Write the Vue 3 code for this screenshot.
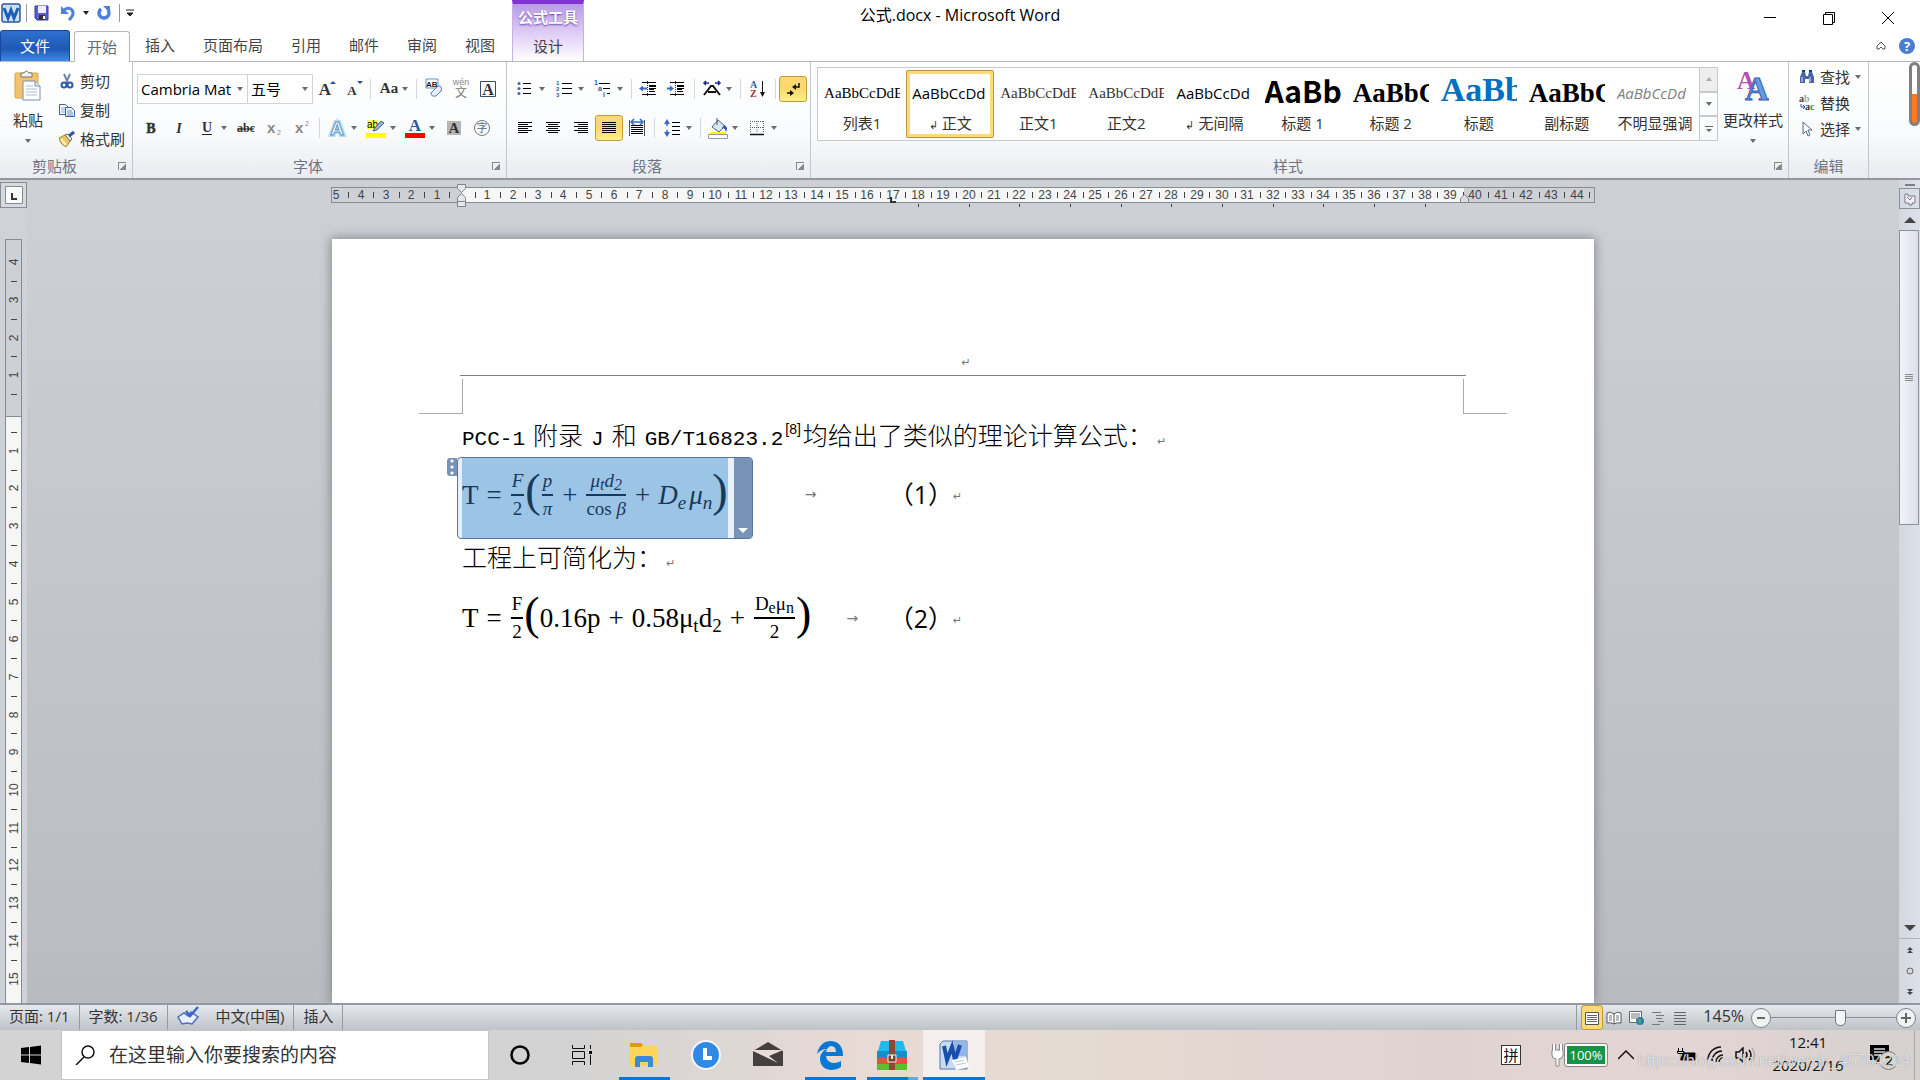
<template>
  <div class="window">
    <!-- Title bar -->
    <header class="title-bar">
      <div class="quick-access">
        <button class="quick app" aria-label="Word"><svg viewBox="0 0 20 20" width="20" height="20" v-html="icons.word"></svg></button>
        <i class="quick-line"></i>
        <button class="quick" aria-label="保存"><svg viewBox="0 0 16 16" width="16" height="16" v-html="icons.save"></svg></button>
        <button class="quick" aria-label="撤消"><svg viewBox="0 0 16 16" width="16" height="16" v-html="icons.undo"></svg></button>
        <i class="caret dark"></i>
        <button class="quick" aria-label="重复"><svg viewBox="0 0 16 16" width="16" height="16" v-html="icons.redo"></svg></button>
        <i class="quick-line"></i>
        <button class="quick more" aria-label="自定义"><svg viewBox="0 0 8 8" width="8" height="8"><path d="M0 1h8M1 4h6L4 7z" stroke="#222" fill="#222" /></svg></button>
      </div>
      <h1>公式.docx - Microsoft Word</h1>
      <div class="window-buttons">
        <button aria-label="最小化"><svg viewBox="0 0 14 14" width="14" height="14"><path d="M1 6.5h12" stroke="#000" /></svg></button>
        <button aria-label="还原"><svg viewBox="0 0 14 14" width="14" height="14"><path d="M1.5 3.5h9v10h-9zM3.5 3.5v-2h9v10h-2" stroke="#000" fill="none" /></svg></button>
        <button aria-label="关闭"><svg viewBox="0 0 14 14" width="14" height="14"><path d="M1 1l12 12M13 1L1 13" stroke="#000" /></svg></button>
      </div>
    </header>

    <!-- Ribbon tabs -->
    <nav class="tabs">
      <button class="tab file">文件</button>
      <button class="tab active">开始</button>
      <button v-for="tab in tabs" :key="tab" class="tab">{{ tab }}</button>
      <div class="context-tab">
        <span>公式工具</span>
        <button>设计</button>
      </div>
      <div class="tab-tools">
        <button aria-label="功能区最小化"><svg viewBox="0 0 10 10" width="10" height="10"><path d="M1 5l4-4 4 4v3H7L5 6 3 8H1z" fill="none" stroke="#555" /></svg></button>
        <button class="help" aria-label="帮助">?</button>
      </div>
    </nav>

    <!-- Ribbon -->
    <section class="ribbon">
      <div class="group clipboard">
        <div class="group-body">
          <button class="big-button">
            <svg viewBox="0 0 28 32" width="28" height="32" v-html="icons.paste"></svg>
            <span>粘贴</span>
            <i class="caret"></i>
          </button>
          <div class="small-buttons">
            <button v-for="item in clipboard" :key="item.label" class="small-button">
              <svg viewBox="0 0 16 16" width="16" height="16" v-html="icons[item.icon]"></svg>{{ item.label }}
            </button>
          </div>
        </div>
        <div class="group-label"><span>剪贴板</span><button class="launcher" aria-label="剪贴板选项"></button></div>
      </div>

      <div class="group font">
        <div class="group-body rows">
          <div class="tool-row narrow">
            <label class="combo family"><input v-model="fontFamily" aria-label="字体" /><i class="caret"></i></label>
            <label class="combo size"><input v-model="fontSize" aria-label="字号" /><i class="caret"></i></label>
            <template v-for="(tool, i) in fontRow1" :key="i">
              <i v-if="tool === '|'" class="divider"></i>
              <button v-else class="tool" :class="{ split: tool.menu, on: tool.on }" :aria-label="tool.name">
                <svg viewBox="0 0 22 22" width="22" height="22" v-html="icons[tool.icon]"></svg>
                <i v-if="tool.menu" class="caret"></i>
              </button>
            </template>
          </div>
          <div class="tool-row">
            <template v-for="(tool, i) in fontRow2" :key="i">
              <i v-if="tool === '|'" class="divider"></i>
              <button v-else class="tool" :class="{ split: tool.menu, on: tool.on }" :aria-label="tool.name">
                <svg viewBox="0 0 22 22" width="22" height="22" v-html="icons[tool.icon]"></svg>
                <i v-if="tool.menu" class="caret"></i>
              </button>
            </template>
          </div>
        </div>
        <div class="group-label"><span>字体</span><button class="launcher" aria-label="字体选项"></button></div>
      </div>

      <div class="group paragraph">
        <div class="group-body rows">
          <div v-for="(row, r) in paragraphRows" :key="r" class="tool-row">
            <template v-for="(tool, i) in row" :key="i">
              <i v-if="tool === '|'" class="divider"></i>
              <button v-else class="tool" :class="{ split: tool.menu, on: tool.on }" :aria-label="tool.name">
                <svg viewBox="0 0 22 22" width="22" height="22" v-html="icons[tool.icon]"></svg>
                <i v-if="tool.menu" class="caret"></i>
              </button>
            </template>
          </div>
        </div>
        <div class="group-label"><span>段落</span><button class="launcher" aria-label="段落选项"></button></div>
      </div>

      <div class="group styles">
        <div class="group-body">
          <div class="gallery">
            <button
              v-for="style in styles"
              :key="style.name"
              class="style-item"
              :class="[style.look, { selected: style.selected }]"
            >
              <span class="sample">{{ style.sample }}</span>
              <span class="style-name"><small v-if="style.mark">↲</small>{{ style.name }}</span>
            </button>
          </div>
          <div class="gallery-scroll">
            <button class="off" aria-label="上一行"><i class="caret up"></i></button>
            <button aria-label="下一行"><i class="caret"></i></button>
            <button aria-label="其他"><svg viewBox="0 0 8 8" width="8" height="8"><path d="M0 1.500h8" stroke="#666" /><path d="M1 4h6L4 7z" fill="#666" /></svg></button>
          </div>
          <button class="big-button change">
            <svg viewBox="0 0 32 32" width="32" height="32" v-html="icons.styles"></svg>
            <span>更改样式</span>
            <i class="caret"></i>
          </button>
        </div>
        <div class="group-label"><span>样式</span><button class="launcher" aria-label="样式选项"></button></div>
      </div>

      <div class="group editing">
        <div class="group-body">
          <div class="small-buttons">
            <button v-for="item in editing" :key="item.label" class="small-button">
              <svg viewBox="0 0 16 16" width="16" height="16" v-html="icons[item.icon]"></svg>{{ item.label }}
              <i v-if="item.menu" class="caret"></i>
            </button>
          </div>
        </div>
        <div class="group-label"><span>编辑</span></div>
      </div>
      <div class="level"><i></i></div>
    </section>

    <!-- Workspace -->
    <main class="workspace">
      <aside class="left-rail">
        <button class="tab-type" aria-label="制表符"><svg viewBox="0 0 18 18" width="18" height="18"><path d="M.5.5h17v17H.5z" fill="#fafafa" stroke="#868b95" /><path d="M7 7v6h5" fill="none" stroke="#333" stroke-width="2" /></svg></button>
        <svg class="v-ruler" width="17" height="800" viewBox="0 0 17 800">
          <rect x="0.5" y="0.5" width="16" height="810" fill="#f6f6f6" stroke="#868b95" />
          <rect x="0.5" y="0.5" width="16" height="177" fill="#cdd0d5" stroke="#868b95" />
          <g v-for="mark in verticalMarks" :key="mark.y">
            <text v-if="mark.label" :transform="`translate(13 ${mark.y}) rotate(-90)`" text-anchor="middle">{{ mark.label }}</text>
            <path v-else :d="`M6 ${mark.y}h6`" stroke="#444" />
          </g>
        </svg>
      </aside>

      <div class="canvas">
        <svg class="h-ruler" width="1264" height="28" viewBox="0 2 1264 28">
          <rect x="0.5" y="9.5" width="1263" height="15" fill="#cdd0d5" stroke="#868b95" />
          <path d="M131 10h1002v14H131z" fill="#f6f6f6" />
          <path d="M0 9.5h1264M0 24.5h1264" stroke="#868b95" />
          <g v-for="mark in horizontalMarks" :key="mark.x">
            <text v-if="mark.label" :x="mark.x" y="21" text-anchor="middle">{{ mark.label }}</text>
            <path v-else :d="`M${mark.x} 14v6`" stroke="#444" />
          </g>
          <path v-for="x in tabStops" :key="x" :d="`M${x} 26v3`" stroke="#444" />
          <path d="M560 19v5h5" fill="none" stroke="#333" stroke-width="2" />
          <path d="M126.5 6.5h8v4l-4 4-4-4zM130.5 15.5l4 4v9h-8v-9zM126.5 23.5h8" fill="#e8e8e8" stroke="#80848c" />
          <path d="M1133.5 16.5l4 4v4h-8v-4z" fill="#ddd" stroke="#80848c" />
        </svg>

        <article class="page">
          <div class="page-header"><span class="return">↵</span></div>
          <div class="corners"><i class="left"></i><i class="right"></i></div>

          <p class="line first">
            <span class="latin">PCC-1</span><span class="word">附录</span><span class="latin">J</span><span class="word">和</span><span class="latin">GB/T16823.2</span><sup>[8]</sup><span>均给出了类似的理论计算公式：</span><span class="return">↵</span>
          </p>

          <div class="equation-row first">
            <div class="equation-box">
              <i class="grip"></i>
              <div class="formula selected">
                <span>T</span><span class="op">=</span>
                <span class="frac"><i>F</i><b>2</b></span>
                <span class="paren">(</span>
                <span class="frac"><i>p</i><i>π</i></span>
                <span class="op">+</span>
                <span class="frac"><i>μ<sub>t</sub>d<sub>2</sub></i><b>cos <i>β</i></b></span>
                <span class="op">+</span>
                <i>D<sub>e</sub></i><i class="mu">μ<sub>n</sub></i>
                <span class="paren">)</span>
              </div>
              <button class="equation-menu" aria-label="公式选项"><i></i></button>
            </div>
            <span class="tab-arrow">→</span>
            <span class="number">（1）</span><span class="return">↵</span>
          </div>

          <p class="line">工程上可简化为：<span class="return">↵</span></p>

          <div class="equation-row second">
            <div class="formula">
              <span>T</span><span class="op">=</span>
              <span class="frac"><b>F</b><b>2</b></span>
              <span class="paren">(</span>
              <span>0.16p</span>
              <span class="op">+</span>
              <span>0.58μ<sub>t</sub>d<sub>2</sub></span>
              <span class="op">+</span>
              <span class="frac"><b>D<sub>e</sub>μ<sub>n</sub></b><b>2</b></span>
              <span class="paren">)</span>
            </div>
            <span class="tab-arrow">→</span>
            <span class="number">（2）</span><span class="return">↵</span>
          </div>
        </article>
      </div>

      <aside class="scroll-rail">
        <i class="splitter"></i>
        <button class="ruler-toggle" aria-label="标尺"><svg viewBox="0 0 14 14" width="14" height="14"><path d="M2 2h3v2h7v7h-3v2H6v-2H2zM4 5l3 3M7 8l2-3" fill="#f4eff4" stroke="#777c85" /></svg></button>
        <button class="arrow" aria-label="向上"><svg viewBox="0 0 12 6" width="12" height="6"><path d="M0 6l6-6 6 6z" fill="#444" /></svg></button>
        <div class="track"><div class="thumb"><i></i></div></div>
        <button class="arrow" aria-label="向下"><svg viewBox="0 0 12 6" width="12" height="6"><path d="M0 0l6 6 6-6z" fill="#444" /></svg></button>
        <div class="browse">
          <button aria-label="前一页"><svg viewBox="0 0 8 8" width="8" height="8"><path d="M1 4l3-3 3 3zM1 7l3-3 3 3z" fill="#444" /></svg></button>
          <button aria-label="选择浏览对象"><svg viewBox="0 0 8 8" width="8" height="8"><circle cx="4" cy="4" r="3" fill="#d5d8dc" stroke="#666" /></svg></button>
          <button aria-label="下一页"><svg viewBox="0 0 8 8" width="8" height="8"><path d="M1 1l3 3 3-3zM1 4l3 3 3-3z" fill="#444" /></svg></button>
        </div>
      </aside>
    </main>

    <!-- Status bar -->
    <footer class="status-bar">
      <button>页面: 1/1</button>
      <button>字数: 1/36</button>
      <button class="language"><svg viewBox="0 0 22 20" width="22" height="20" v-html="icons.proof"></svg>中文(中国)</button>
      <button>插入</button>
      <div class="views">
        <button v-for="view in views" :key="view.icon" :class="{ on: view.on }" :aria-label="view.name">
          <svg viewBox="0 0 16 16" width="16" height="16" v-html="icons[view.icon]"></svg>
        </button>
      </div>
      <button class="percent">{{ zoom }}%</button>
      <button class="round" aria-label="缩小"><svg viewBox="0 0 18 18" width="18" height="18"><path d="M5 9h8" stroke="#666" stroke-width="2" /></svg></button>
      <input v-model="zoom" class="zoom" type="range" min="10" max="250" aria-label="显示比例" />
      <button class="round" aria-label="放大"><svg viewBox="0 0 18 18" width="18" height="18"><path d="M4 9h10M9 4v10" stroke="#666" stroke-width="2" /></svg></button>
    </footer>

    <!-- Windows taskbar -->
    <div class="taskbar">
      <button class="start" aria-label="开始菜单"><svg viewBox="0 0 20 20" width="20" height="20"><path d="M0 3l8-1v7.500H0zM9 2l11-1.500v9H9zM0 10.500h8V18l-8-1zM9 10.500h11v9L9 18z" fill="#000" /></svg></button>
      <label class="search">
        <svg viewBox="0 0 20 20" width="20" height="20"><circle cx="13" cy="7" r="6" fill="none" stroke="#111" stroke-width="1.500" /><path d="M9 12l-8 8" stroke="#111" stroke-width="1.500" /></svg>
        <input type="text" placeholder="在这里输入你要搜索的内容" aria-label="搜索" />
      </label>
      <button v-for="app in apps" :key="app.icon" class="app-button" :class="app.state" :aria-label="app.name">
        <svg viewBox="0 0 30 30" width="30" height="30" v-html="icons[app.icon]"></svg>
      </button>
      <div class="tray">
        <button class="ime">拼</button>
        <div class="battery">
          <svg viewBox="0 0 14 24" width="14" height="24"><path d="M3 1v6M10 1v6" stroke="#888" stroke-width="4" /><path d="M1 7h11v5q0 4-4 4v7H5v-7q-4 0-4-4z" fill="#fff" stroke="#888" /><path d="M3 1v7M10 1v7" stroke="#fff" stroke-width="2" /></svg>
          <span>100%</span>
        </div>
        <button class="chevron" aria-label="显示隐藏的图标"><svg viewBox="0 0 16 10" width="16" height="10"><path d="M0 9l8-8 8 8" fill="none" stroke="#111" stroke-width="1.500" /></svg></button>
        <div class="tray-icons">
          <svg viewBox="0 0 20 14" width="20" height="14"><path d="M6 5h12v7H4V9" fill="#000" stroke="#000" /><path d="M19.500 6v4M1.500 0v3M5.500 0v3M0 3.500h7v2H1zM3.500 5v7" stroke="#000" fill="none" /></svg>
          <svg viewBox="0 0 18 18" width="18" height="18"><path d="M1 14A13 13 0 0 1 14 1M5 15A10 10 0 0 1 15 5M9 16a7 7 0 0 1 7-7M12 16a4 4 0 0 1 4-4" fill="none" stroke="#111" stroke-width="1.500" /></svg>
          <svg viewBox="0 0 20 16" width="20" height="16"><path d="M1 5h3l4-4v14l-4-4H1z" fill="none" stroke="#111" stroke-width="1.500" /><path d="M11 5q2 3 0 6M14 3q4 5 0 10" fill="none" stroke="#111" stroke-width="1.500" /><path d="M17 1q5 7 0 14" fill="none" stroke="#999" /></svg>
        </div>
        <button class="clock"><span>12:41</span><span>2020/2/16</span></button>
        <button class="notice" aria-label="通知">
          <svg viewBox="0 0 22 22" width="22" height="22"><path d="M1 1h19v15h-9l-4 4v-4H1z" fill="#000" /><path d="M5 5h11M5 8h11M5 11h7" stroke="#ddd" stroke-width="1.500" /></svg>
          <b>2</b>
        </button>
      </div>
      <span class="watermark">https://blog.csdn.net/weixin_45704214</span>
    </div>
  </div>
</template>

<script setup>
import { ref } from 'vue'

const fontFamily = ref('Cambria Mat')
const fontSize = ref('五号')
const zoom = ref(145)

const tabs = ['插入', '页面布局', '引用', '邮件', '审阅', '视图']

const clipboard = [
  { icon: 'cut', label: '剪切' },
  { icon: 'copy', label: '复制' },
  { icon: 'brush', label: '格式刷' }
]

const editing = [
  { icon: 'find', label: '查找', menu: true },
  { icon: 'replace', label: '替换' },
  { icon: 'select', label: '选择', menu: true }
]

const fontRow1 = [
  { icon: 'grow', name: '增大字体' },
  { icon: 'shrink', name: '缩小字体' },
  '|',
  { icon: 'caseAa', name: '更改大小写', menu: true },
  '|',
  { icon: 'clear', name: '清除格式' },
  { icon: 'pinyin', name: '拼音指南' },
  { icon: 'boxed', name: '字符边框' }
]

const fontRow2 = [
  { icon: 'bold', name: '加粗' },
  { icon: 'italic', name: '倾斜' },
  { icon: 'underline', name: '下划线', menu: true },
  { icon: 'strike', name: '删除线' },
  { icon: 'subscript', name: '下标' },
  { icon: 'superscript', name: '上标' },
  '|',
  { icon: 'effect', name: '文本效果', menu: true },
  { icon: 'highlight', name: '突出显示', menu: true },
  { icon: 'color', name: '字体颜色', menu: true },
  { icon: 'shaded', name: '字符底纹' },
  { icon: 'enclose', name: '带圈字符' }
]

const paragraphRows = [
  [
    { icon: 'bullets', name: '项目符号', menu: true },
    { icon: 'numbers', name: '编号', menu: true },
    { icon: 'levels', name: '多级列表', menu: true },
    '|',
    { icon: 'outdent', name: '减少缩进量' },
    { icon: 'indent', name: '增加缩进量' },
    '|',
    { icon: 'asian', name: '中文版式', menu: true },
    '|',
    { icon: 'sort', name: '排序' },
    '|',
    { icon: 'marks', name: '显示编辑标记', on: true }
  ],
  [
    { icon: 'left', name: '左对齐' },
    { icon: 'center', name: '居中' },
    { icon: 'right', name: '右对齐' },
    { icon: 'justify', name: '两端对齐', on: true },
    { icon: 'distribute', name: '分散对齐' },
    '|',
    { icon: 'spacing', name: '行距', menu: true },
    '|',
    { icon: 'fill', name: '底纹', menu: true },
    { icon: 'border', name: '边框', menu: true }
  ]
]

const styles = [
  { sample: 'AaBbCcDdE', name: '列表1', look: 'serif' },
  { sample: 'AaBbCcDd', name: '正文', look: 'sans', mark: true, selected: true },
  { sample: 'AaBbCcDdE', name: '正文1', look: 'song' },
  { sample: 'AaBbCcDdE', name: '正文2', look: 'song' },
  { sample: 'AaBbCcDd', name: '无间隔', look: 'sans', mark: true },
  { sample: 'AaBbC', name: '标题 1', look: 'heading1' },
  { sample: 'AaBbC', name: '标题 2', look: 'heading2' },
  { sample: 'AaBbC', name: '标题', look: 'title' },
  { sample: 'AaBbC', name: '副标题', look: 'heading2' },
  { sample: 'AaBbCcDd', name: '不明显强调', look: 'subtle' }
]

const views = [
  { icon: 'viewPage', name: '页面视图', on: true },
  { icon: 'viewRead', name: '阅读版式' },
  { icon: 'viewWeb', name: 'Web 版式' },
  { icon: 'viewOutline', name: '大纲' },
  { icon: 'viewDraft', name: '草稿' }
]

const apps = [
  { icon: 'cortana', name: 'Cortana' },
  { icon: 'taskView', name: '任务视图' },
  { icon: 'explorer', name: '文件资源管理器', state: 'open' },
  { icon: 'clockApp', name: '时钟' },
  { icon: 'mail', name: '邮件' },
  { icon: 'edge', name: 'Edge', state: 'open' },
  { icon: 'archive', name: '压缩', state: 'open several' },
  { icon: 'wordApp', name: 'Word', state: 'current' }
]

// Ruler marks: a number on each unit, a tick on each half unit
const buildMarks = (from, to, step, origin, key) => {
  const marks = []
  for (let half = from * 2; half <= to * 2; half++) {
    if (half === 0) continue
    const place = Math.round(origin + (half / 2) * step)
    marks.push(half % 2 ? { [key]: place + 0.5 } : { [key]: place, label: Math.abs(half / 2) })
  }
  return marks
}
const horizontalMarks = buildMarks(-5, 44.5, 25.33, 131, 'x').map((mark) =>
  mark.label === 5 && mark.x < 20 ? { ...mark, x: 5 } : mark
)
const verticalMarks = buildMarks(-4, 15, 37.7, 174, 'y')
const tabStops = [18, 20, 22, 24, 26, 28, 30, 32, 34, 36, 38].map((n) => Math.round(131 + n * 25.33) + 0.5)

const serifText = (x, y, size, text, extra = '') =>
  `<text x="${x}" y="${y}" font-family="Liberation Serif, serif" font-weight="700" font-size="${size}" text-anchor="middle" fill="#333" ${extra}>${text}</text>`

const lines = (rows, color = '#000') =>
  rows.map(([x, y, w]) => `<path d="M${x} ${y}.5h${w}" stroke="${color}"/>`).join('')

const icons = {
  word: `<rect x="1" y="1" width="18" height="18" rx="2" fill="#cfe0f5" stroke="#2b5797" stroke-width="1.5"/><path d="M3 5l4 10 3-8 3 8 4-10" fill="none" stroke="#1b5fb8" stroke-width="3"/>`,
  save: `<path d="M1 1h13v14H3l-2-2z" fill="#5a5fd0" stroke="#33389c"/><path d="M4 1h8v7H4z" fill="#eef"/><path d="M5 10h6v5H5z" fill="#333"/><path d="M9 11h2v3H9z" fill="#fff"/>`,
  undo: `<path d="M3 6q5-5 9-1 3 4-3 10" fill="none" stroke="#4f7fdc" stroke-width="3"/><path d="M1 1v8h8z" fill="#4f7fdc"/>`,
  redo: `<path d="M5 4A5 5 0 1 0 12 5" fill="none" stroke="#4f7fdc" stroke-width="3.500"/><path d="M7 1h7v7z" fill="#4f7fdc"/>`,
  paste: `<rect x="1" y="3" width="23" height="25" rx="1" fill="#f2c36b" stroke="#d8a545"/><path d="M7 7V3h3q2-4 5 0h3v4z" fill="#f3f3f3" stroke="#777"/><path d="M9 11h12l5 5v14H9z" fill="#fff" stroke="#7590b5"/><path d="M21 11v5h5" fill="#dce6f4" stroke="#7590b5"/><path d="M12 16h7M12 19h11M12 22h11M12 25h11" stroke="#a9bad2"/>`,
  cut: `<path d="M5 1l4 9M11 1L7 10" stroke="#7485a5" stroke-width="2"/><circle cx="5" cy="12" r="2.500" fill="none" stroke="#2c5cad" stroke-width="2"/><circle cx="11" cy="12" r="2.500" fill="none" stroke="#2c5cad" stroke-width="2"/>`,
  copy: `<path d="M.5 2.500h6l3 3v7h-9z" fill="#fff" stroke="#3a62ac"/><path d="M2 6h5M2 8h5M2 10h5" stroke="#8ba6d4"/><path d="M6.500 5.500h6l3 3v6h-9z" fill="#e8f0fb" stroke="#3a62ac"/><path d="M8 9h5M8 11h6M8 13h6" stroke="#6f90cb"/>`,
  brush: `<path d="M0 7l6-3 6 5-5 7q-6-3-7-9z" fill="#e9c566" stroke="#a18237"/><path d="M2 8l5 6" stroke="#fff2bd" stroke-width="2"/><path d="M6 4l3-1 4 5-2 2z" fill="#eee" stroke="#666"/><path d="M10 5l5-4" stroke="#3751a0" stroke-width="3"/>`,
  find: `<path d="M1 14V8l2-5h3l1 4h2l1-4h3l2 5v6h-5v-4H6v4z" fill="#4a64a4"/><path d="M3 2h3M10 2h3" stroke="#20386d" stroke-width="2"/><path d="M3 8v5M11 8v5" stroke="#dbe5f5"/>`,
  replace: `<text x="0" y="7" font-size="10" font-weight="700" font-family="Liberation Serif" fill="#444">a<tspan fill="#aaa">b</tspan></text><text x="6" y="15" font-size="10" font-weight="700" font-family="Liberation Serif" fill="#333">a<tspan fill="#2a8a2a">c</tspan></text><path d="M2 9v3h3M4 10l2 2-2 2" fill="none" stroke="#2b57a7"/>`,
  select: `<path d="M4 1v12l3-3 2 5 2-1-2-5h4z" fill="#fff" stroke="#56688c"/>`,
  styles: `<text x="0" y="19" font-size="25" font-weight="700" font-family="Liberation Serif" fill="#b94fae">A</text><text x="8" y="30" font-size="33" font-weight="700" font-family="Liberation Serif" fill="#6b9ae4" stroke="#315fae">A</text>`,
  grow: serifText(9, 17, 17, 'A') + '<path d="M14 6l3-3 3 3z" fill="#2c4f99"/>',
  shrink: serifText(9, 17, 13, 'A') + '<path d="M14 3h6l-3 3z" fill="#2c4f99"/>',
  caseAa: serifText(12, 15, 15, 'Aa'),
  clear: `<text x="3" y="9" font-size="8" font-weight="700" fill="#222" font-family="Liberation Sans">AB</text><path d="M3 1h12v9H3z" fill="none" stroke="#6f8ec0"/><path d="M8 15l7-7q5 0 3 5l-5 5q-5 1-5-3z" fill="#e6eefa" stroke="#5878b8"/>`,
  pinyin: `<text x="11" y="7" font-size="9" text-anchor="middle" fill="#888" font-family="Liberation Sans">wén</text><text x="11" y="19" font-size="12" text-anchor="middle" fill="#777" font-family="Noto Sans CJK SC">文</text>`,
  boxed: `<path d="M3.500 3.500h15v15h-15z" fill="#fff" stroke="#3b4a67"/>` + serifText(11, 17, 16, 'A'),
  bold: serifText(11, 16, 14, 'B', 'stroke="#333" stroke-width=".5"'),
  italic: serifText(11, 16, 14, 'I', 'font-style="italic"'),
  underline: serifText(11, 15, 14, 'U') + '<path d="M6 17.500h10" stroke="#222"/>',
  strike: serifText(11, 15, 12, 'abc') + '<path d="M2 12h17" stroke="#222"/>',
  subscript: `<text x="4" y="16" font-size="15" font-weight="700" fill="#888" font-family="Liberation Sans">x</text><text x="14" y="18" font-size="7" fill="#888" font-family="Liberation Sans">2</text>`,
  superscript: `<text x="4" y="16" font-size="15" font-weight="700" fill="#888" font-family="Liberation Sans">x</text><text x="14" y="9" font-size="7" fill="#888" font-family="Liberation Sans">2</text>`,
  effect: `<text x="11" y="18" font-size="19" font-weight="700" text-anchor="middle" fill="#fff" stroke="#b5dcf5" stroke-width="4" font-family="Liberation Sans">A</text><text x="11" y="18" font-size="19" font-weight="700" text-anchor="middle" fill="#fff" stroke="#5898ca" font-family="Liberation Sans">A</text>`,
  highlight: `<path d="M2 3h10v9H2z" fill="#ffff4d"/><text x="2" y="11" font-size="10" fill="#000" font-family="Liberation Sans">ab</text><path d="M9 12l7-8 3 2-7 7-4 1z" fill="#9ab3da" stroke="#445f91"/><path d="M1 16h20v5H1z" fill="#ff0"/>`,
  color: serifText(11, 14, 17, 'A', 'style="fill:#2f559e"') + '<path d="M1 16h20v5H1z" fill="#f00"/>',
  shaded: `<path d="M4 4h14v14H4z" fill="#b5b5b5"/>` + serifText(11, 16, 15, 'A'),
  enclose: `<circle cx="11" cy="11" r="7.500" fill="none" stroke="#777"/><text x="11" y="15" font-size="11" text-anchor="middle" fill="#666" font-family="Noto Sans CJK SC">字</text>`,
  bullets: lines([[9, 5, 8], [9, 10, 8], [9, 15, 8]]) + '<circle cx="5" cy="5.500" r="1.500" fill="#3a68b8"/><circle cx="5" cy="10.500" r="1.500" fill="#3a68b8"/><circle cx="5" cy="15.500" r="1.500" fill="#3a68b8"/>',
  numbers: lines([[9, 5, 10], [9, 10, 10], [9, 15, 10]]) + '<g font-size="6" font-weight="700" fill="#2d5cb0" font-family="Liberation Sans"><text x="3" y="7">1</text><text x="3" y="13">2</text><text x="3" y="19">3</text></g>',
  levels: lines([[7, 5, 11], [11, 10, 7], [15, 15, 3]]) + '<g font-size="7" font-weight="700" fill="#2d5cb0" font-family="Liberation Sans"><text x="2" y="7">1</text><text x="6" y="13">a</text><text x="11" y="19">i</text></g>',
  outdent: lines([[4, 4, 14], [11, 7, 7], [11, 10, 7], [11, 13, 6], [4, 16, 14]]) + lines([[11, 8, 7], [11, 11, 5]]) + '<path d="M1 10.500l4-3v2h4v2H5v2z" fill="#356bc4"/><path d="M9.500 3v16" stroke="#333" stroke-dasharray="1 1"/>',
  indent: lines([[4, 4, 14], [11, 7, 7], [11, 10, 7], [11, 13, 6], [4, 16, 14]]) + lines([[11, 8, 7], [11, 11, 5]]) + '<path d="M8 10.500l-4-3v2H1v2h3v2z" fill="#356bc4"/><path d="M9.500 3v16" stroke="#333" stroke-dasharray="1 1"/>',
  asian: `<path d="M3 17l7-9h2l7 9M7 14h8" fill="none" stroke="#111" stroke-width="2"/><path d="M3 5h5M5 3L3 5l2 2M14 5h5M17 3l2 2-2 2" fill="none" stroke="#1c2794" stroke-width="1.500"/>`,
  sort: `<text x="3" y="10" font-size="10" font-weight="700" fill="#3560a9" font-family="Liberation Serif">A</text><text x="3" y="19" font-size="10" font-weight="700" fill="#9b3434" font-family="Liberation Serif">Z</text><path d="M15.500 3v13" stroke="#111"/><path d="M13 14h5l-2.500 5z" fill="#111"/>`,
  marks: `<path d="M17 5v4h-5M5 15h5" stroke="#111" stroke-width="1.500" fill="none"/><path d="M10 9l4-3v6zM12 15l-4-3v6z" fill="#111"/>`,
  left: lines([[4, 5, 14], [4, 7, 10], [4, 9, 14], [4, 11, 10], [4, 13, 14], [4, 15, 10]]),
  center: lines([[4, 5, 14], [6, 7, 10], [4, 9, 14], [6, 11, 10], [4, 13, 14], [6, 15, 10]]),
  right: lines([[4, 5, 14], [8, 7, 10], [4, 9, 14], [8, 11, 10], [4, 13, 14], [8, 15, 10]]),
  justify: lines([[4, 5, 14], [4, 7, 14], [4, 9, 14], [4, 11, 14], [4, 13, 14], [4, 15, 14]]),
  distribute: lines([[5, 8, 12], [5, 10, 12], [5, 12, 12], [5, 14, 12], [5, 16, 12]]) + '<path d="M3.500 3v16M18.500 3v16" stroke="#555"/><path d="M5 5h12M8 2L5 5l3 3M14 2l3 3-3 3" fill="none" stroke="#356bc4" stroke-width="1.500"/>',
  spacing: lines([[11, 5, 8], [11, 9, 8], [11, 13, 8], [11, 17, 8]]) + '<path d="M6 4v14" stroke="#356bc4" stroke-width="1.500" stroke-dasharray="5 4"/><path d="M3 7l3-5 3 5zM3 15l3 5 3-5z" fill="#356bc4"/>',
  fill: `<path d="M5 10l6-7 7 6-6 6z" fill="#dce7f5" stroke="#48638e"/><path d="M10 1v7" stroke="#456"/><path d="M17 8q5 2 2 7-1-4-4-4z" fill="#355d9f"/><path d="M3 16h16" stroke="#ff0" stroke-width="2"/><path d="M1.500 17.500h19v4h-19z" fill="#fff" stroke="#999"/>`,
  border: `<path d="M4 4.500h14M4 10.500h14M4.500 4v12M11 4v12M17.500 4v12" stroke="#666" stroke-dasharray="1 1"/><path d="M4 17.500h14" stroke="#111" stroke-width="1.500"/>`,
  proof: `<path d="M1 11l6-4 4 3 3-4 7 5-6 7-5-1-5 1z" fill="#e9eefa" stroke="#4770c2" stroke-width="1.500"/><path d="M9 5l4 5 8-9" fill="none" stroke="#3569cc" stroke-width="2.500"/>`,
  viewPage: `<path d="M1.500 2.500h13v12h-13z" fill="#fff" stroke="#555"/><path d="M3 5.500h10M3 7.500h10M3 9.500h10M3 11.500h10" stroke="#666"/>`,
  viewRead: `<path d="M8 4q-4-3-7-1v10q4-1 7 1 3-2 7-1V3q-4-2-7 1v10" fill="#fff" stroke="#555"/><path d="M3 6h3M3 8h3M3 10h3M10 6h3M10 8h3M10 10h3" stroke="#777"/>`,
  viewWeb: `<path d="M1.500 1.500h12v11h-12z" fill="#fff" stroke="#666"/><path d="M3 4h9M3 6h9M3 8h6" stroke="#777"/><circle cx="12" cy="11" r="4" fill="#347ba8"/><path d="M10 10q3-3 3 1t-2 2" fill="#4ab35b"/>`,
  viewOutline: lines([[2, 2, 9], [6, 5, 8], [6, 8, 6], [8, 11, 6], [2, 14, 8]], '#777'),
  viewDraft: lines([[2, 2, 12], [2, 5, 12], [2, 8, 12], [2, 11, 12], [2, 14, 12]], '#666'),
  cortana: `<circle cx="15" cy="15" r="8.500" fill="none" stroke="#000" stroke-width="2.500"/>`,
  taskView: `<path d="M5.500 5v3.500h12V5M5.500 25v-3.500h12V25M5.500 11.500h12v7h-12zM23.500 5v4M23.500 15v10" fill="none" stroke="#111"/><path d="M22 11h3v3h-3z"/>`,
  explorer: `<path d="M1 3h11l2 3h14v20H1z" fill="#ffd45c"/><path d="M1 3h11l2 2-2 2H1z" fill="#dc9d00"/><path d="M6 27V19q0-3 3-3h12q3 0 3 3v8h-5v-5h-8v5z" fill="#3c8bd0"/>`,
  clockApp: `<circle cx="15" cy="15" r="14" fill="#2f8ae6" stroke="#f4f7fa" stroke-width="2"/><path d="M14 8v10h7" fill="none" stroke="#fff" stroke-width="4"/>`,
  mail: `<path d="M0 11l15-9 15 9v15H0z" fill="#44403d"/><path d="M0 10h30l-14 6 9 7-25-12z" fill="#eadcd6"/>`,
  edge: `<path d="M2 14C4 5 9 1 16 1q12 1 12 15H11q1 7 8 7 4 0 7-2v6q-4 3-10 3Q5 29 5 18q1-7 7-9-6 0-10 5zM11 12h10q0-6-5-6-4 1-5 6z" fill="#0878d4"/>`,
  archive: `<path d="M4 1h22l3 10H1z" fill="#20b9ed"/><path d="M0 11h30v7H0z" fill="#158fc6"/><path d="M0 18h30v6H0z" fill="#e35436"/><path d="M0 24h30v6H0z" fill="#5fbb2f"/><path d="M12 0h6v30h-6z" fill="#8b4b32"/><path d="M11 15h8v7h-8z" fill="#75422e" stroke="#eee"/><path d="M14 15h2v4h-2z" fill="#eee"/>`,
  wordApp: `<path d="M4 1h24v28H1V4z" fill="#c9dbf4" stroke="#5276b1"/><path d="M15 1h13v15H15z" fill="#94b6e6"/><path d="M5 6l3 14 5-13 3 13 5-15" fill="none" stroke="#174fab" stroke-width="4"/><path d="M13 20l14-3 3 10-13 3z" fill="#fff"/><path d="M16 22l9-2M17 25l10-2" stroke="#b4c8e4"/>`
}
</script>

<style>
body {
  margin: 0;
  overflow: hidden;
}
</style>

<style scoped>
.window {
  height: 100vh;
  display: flex;
  flex-direction: column;
  background: #fff;
  color: #333;
  font-family: "Open Sans", "Noto Sans CJK SC", sans-serif;
  font-size: 15px;
  line-height: 20px;
}

button {
  border: 0;
  padding: 0;
  background: none;
  color: inherit;
  font: inherit;
  white-space: nowrap;
}

svg {
  display: block;
  flex: none;
}

/* Title bar */
.title-bar {
  height: 30px;
  display: grid;
  grid-template-columns: 1fr auto 1fr;
  color: #000;
}

.title-bar h1 {
  margin: 0;
  font-size: 16px;
  font-weight: 400;
  line-height: 30px;
}

.quick-access {
  display: flex;
  align-items: center;
  height: 26px;
  gap: 4px;
}

.quick {
  width: 22px;
  display: flex;
  justify-content: center;
}

.quick.more {
  width: 12px;
}

.quick-line {
  width: 1px;
  height: 18px;
  background: #999;
}

.window-buttons {
  display: flex;
  justify-content: flex-end;
  align-items: flex-end;
  padding-right: 3px;
}

.window-buttons button {
  width: 59px;
  height: 25px;
  display: grid;
  place-items: center;
}

.caret {
  flex: none;
  width: 0;
  height: 0;
  border: 3px solid transparent;
  border-top: 4px solid #6b6b6b;
  border-bottom: 0;
}

.caret.dark {
  border-top-color: #222;
}

.caret.up {
  border-top: 0;
  border-bottom: 4px solid #aaa;
}

/* Tabs */
.tabs {
  height: 32px;
  display: flex;
  align-items: flex-end;
  border-bottom: 1px solid #b4b7bc;
  box-sizing: border-box;
}

.tab {
  height: 31px;
  padding: 0 14px 1px;
  color: #444;
}

.tab.file {
  width: 70px;
  margin-right: 4px;
  border: 1px solid #1b489b;
  border-bottom: 0;
  border-radius: 3px 3px 0 0;
  background: linear-gradient(#2f70d0, #2058b4 60%, #3c8ae8);
  color: #fff;
}

.tab.active {
  width: 56px;
  padding: 0 12px 1px;
  margin-right: 1px;
  margin-bottom: -1px;
  border: 1px solid #b4b7bc;
  border-bottom: 0;
  border-radius: 3px 3px 0 0;
  background: #fff;
  color: #626a7c;
}

.context-tab {
  display: flex;
  flex-direction: column;
  align-items: center;
  width: 72px;
  height: 61px;
  margin: -30px 0 0 3px;
  padding-top: 5px;
  border: 1px solid #c9b0ea;
  border-bottom: 0;
  border-top: 4px solid #8331d5;
  box-sizing: border-box;
  background: linear-gradient(#b79be5, #e5d6f8 60%, #fff);
}

.context-tab span {
  color: #fff;
  font-weight: 700;
  line-height: 16px;
  text-shadow: 0 1px 2px #6b3fb0;
}

.context-tab button {
  margin-top: 11px;
  color: #444;
}

.tab-tools {
  margin-left: auto;
  height: 31px;
  display: flex;
  align-items: center;
  gap: 13px;
  padding-right: 5px;
}

.help {
  width: 16px;
  height: 16px;
  border-radius: 50%;
  background: #4a7ed0;
  color: #fff;
  font-size: 13px;
  line-height: 16px;
  font-weight: 700;
}

/* Ribbon */
.ribbon {
  flex: none;
  height: 118px;
  display: flex;
  background: linear-gradient(#fff, #fafbfc 60%, #e9ecf0);
  border-bottom: 2px solid #93979e;
  box-sizing: border-box;
}

.group {
  display: flex;
  flex-direction: column;
  box-sizing: border-box;
  border-right: 1px solid #c3c7cd;
}

.group-body {
  flex: 1;
  display: flex;
  min-height: 0;
}

.group-label {
  height: 24px;
  display: flex;
  align-items: center;
  color: #6c7484;
}

.group-label span {
  flex: 1;
  padding-right: 9px;
  text-align: center;
}

.editing .group-label span {
  padding-right: 0;
}

.launcher {
  width: 8px;
  height: 8px;
  margin-right: 6px;
  border-top: 1px solid #888;
  border-left: 1px solid #888;
  background: linear-gradient(135deg, transparent 50%, #888 50%);
}

.clipboard {
  width: 133px;
}

.font {
  width: 374px;
}

.paragraph {
  width: 304px;
}

.styles {
  flex: 1;
  min-width: 0;
}

.editing {
  width: 80px;
}

.big-button {
  display: flex;
  flex-direction: column;
  align-items: center;
  width: 56px;
  padding-top: 8px;
}

.big-button span {
  margin: 8px 0 9px;
}

.small-buttons {
  display: flex;
  flex-direction: column;
  padding: 4px 0 0 3px;
}

.small-button {
  height: 29px;
  display: flex;
  align-items: center;
  gap: 5px;
}

.editing .small-buttons {
  padding: 2px 0 0 10px;
}

.editing .small-button {
  height: 26px;
}

.rows {
  flex-direction: column;
  gap: 9px;
  padding: 12px 0 0 4px;
}

.tool-row {
  height: 30px;
  display: flex;
  align-items: center;
}

.tool {
  width: 28px;
  height: 26px;
  flex: none;
  display: flex;
  align-items: center;
  justify-content: center;
  box-sizing: border-box;
}

.narrow .tool {
  width: 27px;
}

.tool.split,
.narrow .tool.split {
  width: 36px;
  margin-right: 3px;
  justify-content: flex-start;
  padding-left: 3px;
  gap: 3px;
}

.tool.on {
  border: 1px solid #c29a3c;
  border-radius: 3px;
  background: linear-gradient(#fbd978, #fdd865 50%, #fff08a);
}

.divider {
  width: 1px;
  height: 20px;
  margin: 0 3px;
  background: #d4d7dc;
}

.combo {
  height: 30px;
  display: flex;
  align-items: center;
  border: 1px solid #d0d3d8;
  box-sizing: border-box;
  padding-right: 4px;
  background: #fff;
}

.combo.family {
  width: 111px;
}

.combo.size {
  width: 66px;
  margin-left: -1px;
}

.combo input {
  width: 0;
  flex: 1;
  border: 0;
  padding: 0 0 0 3px;
  outline: 0;
  background: none;
  color: #000;
  font: inherit;
}

.gallery {
  flex: 1;
  min-width: 0;
  display: grid;
  grid-template-columns: repeat(10, 1fr);
  margin: 5px 0 0 6px;
  height: 74px;
  border: 1px solid #c6cacf;
  box-sizing: border-box;
  background: #fff;
}

.style-item {
  margin: 2px 0;
  min-width: 0;
  display: flex;
  flex-direction: column;
  align-items: center;
  overflow: hidden;
  border: 1px solid transparent;
}

.style-item.selected {
  border: 1px solid #bf953d;
  border-radius: 2px;
  box-shadow: inset 0 0 0 3px #fdd977;
}

.sample {
  width: 76px;
  height: 38px;
  line-height: 45px;
  overflow: hidden;
  color: #000;
  text-align: left;
}

.style-name {
  margin-top: 4px;
}

.style-name small {
  margin-right: 4px;
  font-size: 11px;
}

.serif .sample {
  font-family: "Liberation Serif", serif;
  font-size: 15px;
}

.song .sample {
  font-family: "Liberation Serif", serif;
  font-size: 15px;
  color: #333;
}

.heading1 .sample {
  font-size: 30px;
  font-weight: 700;
  line-height: 38px;
  font-family: "Noto Sans CJK SC", sans-serif;
}

.heading2 .sample {
  font-family: "Liberation Serif", serif;
  font-size: 27px;
  font-weight: 700;
}

.title .sample {
  color: #0070c0;
  font-family: "Liberation Serif", serif;
  font-size: 34px;
  font-weight: 700;
  line-height: 38px;
}

.subtle .sample {
  color: #808080;
  font-style: italic;
}

.gallery-scroll {
  width: 18px;
  height: 74px;
  margin-top: 5px;
  display: grid;
  grid-template-rows: repeat(3, 1fr);
}

.gallery-scroll button {
  display: grid;
  place-items: center;
  border: 1px solid #c6cacf;
  border-left: 0;
}

.gallery-scroll .off {
  background: #eee;
}

.big-button.change {
  width: 70px;
  padding-top: 8px;
}

.level {
  width: 51px;
  display: flex;
  justify-content: flex-end;
}

.level i {
  width: 5px;
  height: 58px;
  border: 3px solid #808080;
  border-radius: 6px;
  background: linear-gradient(#fff 50%, #ff7a1a 50%);
}

/* Workspace */
.workspace {
  flex: 1;
  min-height: 0;
  display: flex;
  background: linear-gradient(#cdd0d5, #b8bbbf);
}

.left-rail {
  width: 27px;
  flex: none;
  overflow: hidden;
  background: #cfd2d8;
}

.tab-type {
  display: grid;
  place-items: center;
  width: 27px;
  height: 26px;
  margin: 2px 0 31px;
  border: 1px solid #868b95;
  background: #d6d9dd;
}

.v-ruler {
  margin-left: 5px;
}

.h-ruler text,
.v-ruler text {
  fill: #444;
  font-family: "Liberation Sans Narrow", "Liberation Sans", sans-serif;
  font-size: 12px;
}

.canvas {
  flex: 1;
  min-width: 0;
  overflow: hidden;
  display: flex;
  flex-direction: column;
  align-items: center;
  gap: 31px;
}

.page {
  width: 1262px;
  max-width: 100%;
  flex: 1;
  box-sizing: border-box;
  padding: 0 130px;
  background: #fff;
  box-shadow: 0 0 10px 1px #84878c;
  color: #000;
}

.page-header {
  display: flex;
  align-items: flex-end;
  justify-content: center;
  height: 137px;
  margin: 0 -2px;
  border-bottom: 1px solid #7f7f7f;
  box-sizing: border-box;
  padding-left: 6px;
}

.return {
  color: #777;
  font-family: "DejaVu Sans", sans-serif;
  font-size: 11px;
  line-height: 24px;
}

.corners {
  display: flex;
  justify-content: space-between;
  margin: 3px -43px 0;
}

.corners i {
  width: 43px;
  height: 34px;
  border-bottom: 1px solid #aaa;
}

.corners .left {
  border-right: 1px solid #aaa;
}

.corners .right {
  border-left: 1px solid #aaa;
}

.line {
  height: 36px;
  margin: 0;
  font-family: "Noto Sans CJK SC", sans-serif;
  font-size: 25px;
  font-weight: 300;
  line-height: 34px;
  white-space: nowrap;
}

.line.first {
  height: 43px;
  line-height: 41px;
}

.latin {
  font-family: "Liberation Mono", monospace;
  font-size: 21px;
  line-height: 0;
}

.word {
  margin: 0 8px;
}

.line sup {
  margin: 0 2px;
  font-family: "Liberation Sans Narrow", "Liberation Sans", sans-serif;
  font-size: 14px;
  line-height: 0;
  vertical-align: 11px;
}

.line .return {
  margin-left: 4px;
  line-height: 0;
}

.equation-row {
  display: flex;
  align-items: center;
  height: 82px;
}

.equation-row.second {
  height: 86px;
}

.equation-row.first > span {
  padding-bottom: 8px;
}

.equation-box {
  display: flex;
  align-self: stretch;
  margin: 0 -25px 0 -5px;
  border: 1px solid #58769f;
  border-radius: 4px;
  background: #e8f1fa;
}

.grip {
  width: 10px;
  height: 18px;
  margin-left: -11px;
  border-radius: 3px 0 0 3px;
  background: radial-gradient(circle, #fff 1px, #7893b8 2px) 0 0 / 10px 6px;
}

.formula {
  display: flex;
  align-items: center;
  font-family: "Liberation Serif", serif;
  font-size: 27px;
  line-height: 30px;
  white-space: nowrap;
}

.formula.selected {
  margin: 0 6px 0 5px;
  padding-bottom: 6px;
  background: #9bc4e7;
  color: #17395c;
}

.formula sub {
  font-size: 19px;
  line-height: 0;
  vertical-align: -5px;
}

.formula .mu {
  margin-left: 3px;
}

.op {
  margin: 0 8px;
}

.frac {
  display: flex;
  flex-direction: column;
  align-items: center;
  margin: 0 1px;
  font-size: 19px;
  line-height: 26px;
}

.frac > * {
  font-weight: 400;
}

.frac > :first-child {
  align-self: stretch;
  padding: 0 1px;
  text-align: center;
  border-bottom: 2px solid currentColor;
}

.frac sub {
  font-size: 16px;
  vertical-align: -3px;
}

.paren {
  font-size: 46px;
  line-height: 40px;
  height: 48px;
}

.equation-menu {
  width: 18px;
  display: flex;
  align-items: flex-end;
  justify-content: center;
  padding-bottom: 5px;
  background: #7893b8;
}

.equation-menu i {
  border: 5px solid transparent;
  border-top-color: #fff;
  border-bottom: 0;
}

.tab-arrow {
  width: 0;
  flex: 1;
  text-align: center;
  color: #777;
  font-family: "DejaVu Sans", sans-serif;
  font-size: 14px;
}

.equation-row .number {
  font-size: 25px;
  line-height: 30px;
  margin-left: -5px;
}

.equation-row .return {
  flex: 0 0 511px;
  padding-top: 6px;
}

/* Scroll bar */
.scroll-rail {
  width: 21px;
  flex: none;
  display: flex;
  flex-direction: column;
  align-items: center;
  background: linear-gradient(90deg, #d3d8df, #dde1ea);
}

.splitter {
  width: 10px;
  height: 2px;
  margin: 4px 0 2px;
  background: #7b7f87;
}

.ruler-toggle {
  width: 21px;
  height: 21px;
  display: grid;
  place-items: center;
  border: 1px solid #8a92a0;
}

.arrow {
  height: 21px;
  width: 20px;
  display: grid;
  place-items: center;
}

.track {
  flex: 1;
  align-self: stretch;
}

.thumb {
  height: 43%;
  margin-right: 1px;
  display: grid;
  place-items: center;
  border: 1px solid #8a92a0;
  box-sizing: border-box;
  background: linear-gradient(90deg, #f1f4f8, #dcdfe8);
}

.thumb i {
  width: 8px;
  height: 8px;
  background: repeating-linear-gradient(#888 0 1px, transparent 1px 2px);
}

.browse {
  height: 64px;
  align-self: stretch;
  display: grid;
  grid-template-rows: repeat(3, 1fr);
  place-items: center;
  border-top: 1px solid #adb3bd;
}

/* Status bar */
.status-bar {
  height: 27px;
  flex: none;
  display: flex;
  align-items: stretch;
  box-sizing: border-box;
  border-top: 2px solid #9299a6;
  background: linear-gradient(#e5e8ec, #bec3c8);
}

.status-bar > button {
  padding: 0 9px 3px;
  border-right: 1px solid #969ba3;
}

.status-bar .language {
  display: flex;
  align-items: center;
  gap: 17px;
  padding-left: 9px;
}

.views {
  margin-left: auto;
  display: flex;
  padding-left: 4px;
  border-left: 1px solid #969ba3;
}

.views button {
  width: 22px;
  display: grid;
  place-items: center;
  box-sizing: border-box;
}

.views .on {
  border: 1px solid #c29a3c;
  border-radius: 3px;
  background: #fdd977;
}

.status-bar .percent {
  border: 0;
  padding: 0 7px 3px 12px;
  font-size: 16px;
}

.status-bar .round {
  align-self: center;
  width: 20px;
  height: 20px;
  padding: 0;
  border: 1px solid #7c828c;
  border-radius: 50%;
  background: #f1f2f4;
}

.status-bar .round:last-child {
  margin-right: 4px;
}

.zoom {
  appearance: none;
  width: 125px;
  margin: 0;
  background: linear-gradient(#8a919d, #8a919d) center / 100% 1px no-repeat;
}

.zoom::-webkit-slider-thumb {
  appearance: none;
  width: 11px;
  height: 16px;
  border: 1px solid #6f7680;
  border-radius: 1px 1px 5px 5px;
  background: #f4f5f7;
}

/* Taskbar */
.taskbar {
  position: relative;
  flex: none;
  height: 50px;
  display: flex;
  background: linear-gradient(90deg, #d3d3d3 30%, #e8dad4 45%, #e4dbd2 55%, #dfd3d0 75%, #e3d5d3 88%, #d5d1d0);
  color: #111;
}

.start {
  width: 61px;
  display: grid;
  place-items: center;
}

.search {
  width: 428px;
  display: flex;
  align-items: center;
  gap: 14px;
  box-sizing: border-box;
  padding-left: 13px;
  border: 1px solid #c5c5c5;
  background: #fff;
}

.search input {
  flex: 1;
  border: 0;
  padding: 0;
  outline: 0;
  font: inherit;
  font-size: 19px;
}

.search input::placeholder {
  color: #333;
}

.app-button {
  width: 62px;
  display: grid;
  place-items: center;
}

.app-button.open {
  background: linear-gradient(#0878d4, #0878d4) center bottom / 51px 3px no-repeat;
}

.app-button.several {
  background-image: linear-gradient(90deg, #0878d4 80%, #62a8e0 80%);
}

.app-button.current {
  background: #f4efec;
  box-shadow: inset 0 -3px #0878d4;
}

.tray {
  margin-left: auto;
  display: flex;
  align-items: center;
  padding-right: 5px;
  margin-right: 5px;
  border-right: 1px solid #aaa;
}

.ime {
  width: 20px;
  height: 20px;
  margin-right: 30px;
  border: 1px solid #333;
  background: #fff;
  font-size: 15px;
  line-height: 17px;
}

.battery {
  display: flex;
  align-items: center;
}

.battery span {
  width: 38px;
  border: 2px solid #fff;
  outline: 1px solid #888;
  border-radius: 2px;
  background: #159447;
  color: #fff;
  font-size: 13px;
  line-height: 18px;
  text-align: center;
}

.chevron {
  margin: 0 43px 0 11px;
}

.tray-icons {
  display: flex;
  align-items: center;
  gap: 10px;
}

.clock {
  width: 90px;
  display: flex;
  flex-direction: column;
  align-items: center;
  gap: 3px;
  margin-left: 8px;
  padding-bottom: 3px;
}

.notice {
  position: relative;
  width: 40px;
  height: 30px;
  margin-left: 16px;
}

.notice b {
  position: absolute;
  left: 10px;
  top: 11px;
  width: 17px;
  height: 17px;
  border: 1px solid #777;
  border-radius: 50%;
  background: #dcd6d4;
  font-size: 14px;
  line-height: 17px;
}

.watermark {
  position: absolute;
  right: 10px;
  bottom: 9px;
  color: rgba(255, 255, 255, 0.75);
  font-family: "Liberation Sans", sans-serif;
  font-size: 16px;
  text-shadow: 0 0 1px rgba(90, 90, 90, 0.7);
}
</style>
